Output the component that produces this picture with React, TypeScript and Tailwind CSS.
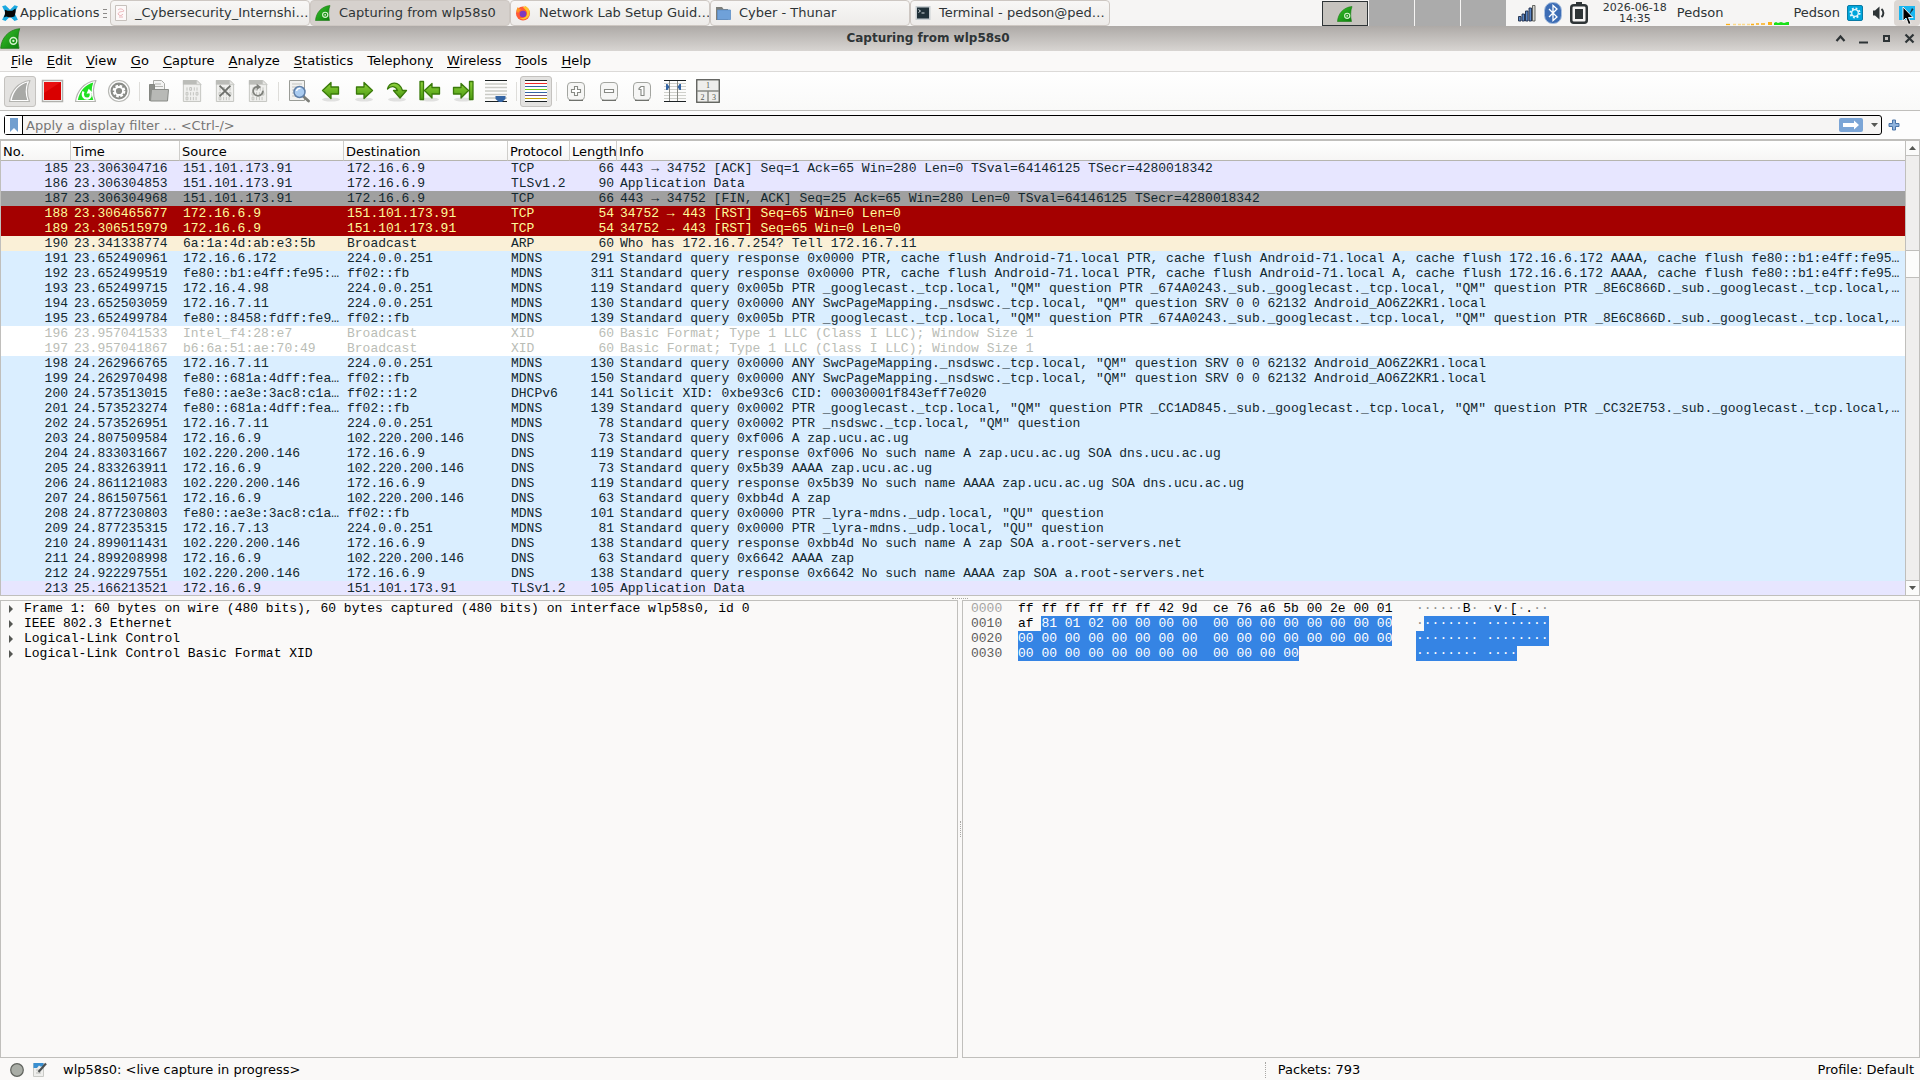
import { type ReactNode } from 'react';
import clsx from 'clsx';

type Packet = {
  no: number;
  time: string;
  source: string;
  destination: string;
  protocol: string;
  length: number;
  info: string;
  kind?: 'tcp' | 'fin' | 'rst' | 'arp' | 'xid';
};

const packets: Packet[] = [
  { no: 185, time: '23.306304716', source: '151.101.173.91', destination: '172.16.6.9', protocol: 'TCP', length: 66, info: '443 → 34752 [ACK] Seq=1 Ack=65 Win=280 Len=0 TSval=64146125 TSecr=4280018342', kind: 'tcp' },
  { no: 186, time: '23.306304853', source: '151.101.173.91', destination: '172.16.6.9', protocol: 'TLSv1.2', length: 90, info: 'Application Data', kind: 'tcp' },
  { no: 187, time: '23.306304968', source: '151.101.173.91', destination: '172.16.6.9', protocol: 'TCP', length: 66, info: '443 → 34752 [FIN, ACK] Seq=25 Ack=65 Win=280 Len=0 TSval=64146125 TSecr=4280018342', kind: 'fin' },
  { no: 188, time: '23.306465677', source: '172.16.6.9', destination: '151.101.173.91', protocol: 'TCP', length: 54, info: '34752 → 443 [RST] Seq=65 Win=0 Len=0', kind: 'rst' },
  { no: 189, time: '23.306515979', source: '172.16.6.9', destination: '151.101.173.91', protocol: 'TCP', length: 54, info: '34752 → 443 [RST] Seq=65 Win=0 Len=0', kind: 'rst' },
  { no: 190, time: '23.341338774', source: '6a:1a:4d:ab:e3:5b', destination: 'Broadcast', protocol: 'ARP', length: 60, info: 'Who has 172.16.7.254? Tell 172.16.7.11', kind: 'arp' },
  { no: 191, time: '23.652490961', source: '172.16.6.172', destination: '224.0.0.251', protocol: 'MDNS', length: 291, info: 'Standard query response 0x0000 PTR, cache flush Android-71.local PTR, cache flush Android-71.local A, cache flush 172.16.6.172 AAAA, cache flush fe80::b1:e4ff:fe95…' },
  { no: 192, time: '23.652499519', source: 'fe80::b1:e4ff:fe95:…', destination: 'ff02::fb', protocol: 'MDNS', length: 311, info: 'Standard query response 0x0000 PTR, cache flush Android-71.local PTR, cache flush Android-71.local A, cache flush 172.16.6.172 AAAA, cache flush fe80::b1:e4ff:fe95…' },
  { no: 193, time: '23.652499715', source: '172.16.4.98', destination: '224.0.0.251', protocol: 'MDNS', length: 119, info: 'Standard query 0x005b PTR _googlecast._tcp.local, "QM" question PTR _674A0243._sub._googlecast._tcp.local, "QM" question PTR _8E6C866D._sub._googlecast._tcp.local,…' },
  { no: 194, time: '23.652503059', source: '172.16.7.11', destination: '224.0.0.251', protocol: 'MDNS', length: 130, info: 'Standard query 0x0000 ANY SwcPageMapping._nsdswc._tcp.local, "QM" question SRV 0 0 62132 Android_AO6Z2KR1.local' },
  { no: 195, time: '23.652499784', source: 'fe80::8458:fdff:fe9…', destination: 'ff02::fb', protocol: 'MDNS', length: 139, info: 'Standard query 0x005b PTR _googlecast._tcp.local, "QM" question PTR _674A0243._sub._googlecast._tcp.local, "QM" question PTR _8E6C866D._sub._googlecast._tcp.local,…' },
  { no: 196, time: '23.957041533', source: 'Intel_f4:28:e7', destination: 'Broadcast', protocol: 'XID', length: 60, info: 'Basic Format; Type 1 LLC (Class I LLC); Window Size 1', kind: 'xid' },
  { no: 197, time: '23.957041867', source: 'b6:6a:51:ae:70:49', destination: 'Broadcast', protocol: 'XID', length: 60, info: 'Basic Format; Type 1 LLC (Class I LLC); Window Size 1', kind: 'xid' },
  { no: 198, time: '24.262966765', source: '172.16.7.11', destination: '224.0.0.251', protocol: 'MDNS', length: 130, info: 'Standard query 0x0000 ANY SwcPageMapping._nsdswc._tcp.local, "QM" question SRV 0 0 62132 Android_AO6Z2KR1.local' },
  { no: 199, time: '24.262970498', source: 'fe80::681a:4dff:fea…', destination: 'ff02::fb', protocol: 'MDNS', length: 150, info: 'Standard query 0x0000 ANY SwcPageMapping._nsdswc._tcp.local, "QM" question SRV 0 0 62132 Android_AO6Z2KR1.local' },
  { no: 200, time: '24.573513015', source: 'fe80::ae3e:3ac8:c1a…', destination: 'ff02::1:2', protocol: 'DHCPv6', length: 141, info: 'Solicit XID: 0xbe93c6 CID: 00030001f843eff7e020' },
  { no: 201, time: '24.573523274', source: 'fe80::681a:4dff:fea…', destination: 'ff02::fb', protocol: 'MDNS', length: 139, info: 'Standard query 0x0002 PTR _googlecast._tcp.local, "QM" question PTR _CC1AD845._sub._googlecast._tcp.local, "QM" question PTR _CC32E753._sub._googlecast._tcp.local,…' },
  { no: 202, time: '24.573526951', source: '172.16.7.11', destination: '224.0.0.251', protocol: 'MDNS', length: 78, info: 'Standard query 0x0002 PTR _nsdswc._tcp.local, "QM" question' },
  { no: 203, time: '24.807509584', source: '172.16.6.9', destination: '102.220.200.146', protocol: 'DNS', length: 73, info: 'Standard query 0xf006 A zap.ucu.ac.ug' },
  { no: 204, time: '24.833031667', source: '102.220.200.146', destination: '172.16.6.9', protocol: 'DNS', length: 119, info: 'Standard query response 0xf006 No such name A zap.ucu.ac.ug SOA dns.ucu.ac.ug' },
  { no: 205, time: '24.833263911', source: '172.16.6.9', destination: '102.220.200.146', protocol: 'DNS', length: 73, info: 'Standard query 0x5b39 AAAA zap.ucu.ac.ug' },
  { no: 206, time: '24.861121083', source: '102.220.200.146', destination: '172.16.6.9', protocol: 'DNS', length: 119, info: 'Standard query response 0x5b39 No such name AAAA zap.ucu.ac.ug SOA dns.ucu.ac.ug' },
  { no: 207, time: '24.861507561', source: '172.16.6.9', destination: '102.220.200.146', protocol: 'DNS', length: 63, info: 'Standard query 0xbb4d A zap' },
  { no: 208, time: '24.877230803', source: 'fe80::ae3e:3ac8:c1a…', destination: 'ff02::fb', protocol: 'MDNS', length: 101, info: 'Standard query 0x0000 PTR _lyra-mdns._udp.local, "QU" question' },
  { no: 209, time: '24.877235315', source: '172.16.7.13', destination: '224.0.0.251', protocol: 'MDNS', length: 81, info: 'Standard query 0x0000 PTR _lyra-mdns._udp.local, "QU" question' },
  { no: 210, time: '24.899011431', source: '102.220.200.146', destination: '172.16.6.9', protocol: 'DNS', length: 138, info: 'Standard query response 0xbb4d No such name A zap SOA a.root-servers.net' },
  { no: 211, time: '24.899208998', source: '172.16.6.9', destination: '102.220.200.146', protocol: 'DNS', length: 63, info: 'Standard query 0x6642 AAAA zap' },
  { no: 212, time: '24.922297551', source: '102.220.200.146', destination: '172.16.6.9', protocol: 'DNS', length: 138, info: 'Standard query response 0x6642 No such name AAAA zap SOA a.root-servers.net' },
  { no: 213, time: '25.166213521', source: '172.16.6.9', destination: '151.101.173.91', protocol: 'TLSv1.2', length: 105, info: 'Application Data', kind: 'tcp' },
];

const menus = [
  ['', 'F', 'ile'],
  ['', 'E', 'dit'],
  ['', 'V', 'iew'],
  ['', 'G', 'o'],
  ['', 'C', 'apture'],
  ['', 'A', 'nalyze'],
  ['', 'S', 'tatistics'],
  ['Telephon', 'y', ''],
  ['', 'W', 'ireless'],
  ['', 'T', 'ools'],
  ['', 'H', 'elp'],
];

const details = [
  'Frame 1: 60 bytes on wire (480 bits), 60 bytes captured (480 bits) on interface wlp58s0, id 0',
  'IEEE 802.3 Ethernet',
  'Logical-Link Control',
  'Logical-Link Control Basic Format XID',
];

// hex / ascii are split into [plain, selected]
const hexRows = [
  { offset: '0000', hex: ['ff ff ff ff ff ff 42 9d  ce 76 a6 5b 00 2e 00 01', ''], ascii: ['······B· ·v·[·.··', ''] },
  { offset: '0010', hex: ['af ', '81 01 02 00 00 00 00  00 00 00 00 00 00 00 00'], ascii: ['·', '······· ········'] },
  { offset: '0020', hex: ['', '00 00 00 00 00 00 00 00  00 00 00 00 00 00 00 00'], ascii: ['', '········ ········'] },
  { offset: '0030', hex: ['', '00 00 00 00 00 00 00 00  00 00 00 00'], ascii: ['', '········ ····'] },
];

const getRowStyle = (kind?: string) => {
  switch (kind) {
    case 'tcp': return 'bg-[#e7e6ff] text-[#12272e]';
    case 'fin': return 'bg-[#a0a0a0] text-[#12272e]';
    case 'rst': return 'bg-[#a40000] text-[#fffc9c]';
    case 'arp': return 'bg-[#faf0d7] text-[#12272e]';
    case 'xid': return 'bg-white text-[#babdb6]';
    default: return 'bg-[#daeeff] text-[#12272e]';
  }
};

/* ---------- icons ---------- */

function FinLogo({ size = 16 }: { size?: number }) {
  return (
    <svg width={size} height={size} viewBox="0 0 16 16" aria-hidden="true">
      <defs>
        <linearGradient id="fin-logo" x1="0" y1="0" x2="1" y2="1">
          <stop offset="0" stopColor="#3ac42c" />
          <stop offset="1" stopColor="#0a7d0c" />
        </linearGradient>
      </defs>
      <path d="M.5 15.500C1 8 6 1.500 15 .5c-1.600 4-1.700 10-.5 15z" fill="url(#fin-logo)" stroke="#1b7a14" strokeWidth=".6" />
      <circle cx="10.200" cy="9.800" r="2.600" fill="none" stroke="#d6f3cf" strokeWidth="1.100" />
      <circle cx="10.200" cy="9.800" r=".9" fill="#d6f3cf" />
    </svg>
  );
}

function Fin({ fill, children }: { fill: string; children?: ReactNode }) {
  return (
    <svg width="24" height="24" viewBox="0 0 24 24" aria-hidden="true">
      <path d="M1.500 22.500C3 12 10 3 22 1.500 18.500 8 19 16 21.500 22.500z" fill="#fff" stroke="#b4b4b0" strokeWidth="1.200" strokeLinejoin="round" />
      <path d="M3.800 21C5.500 12.500 11 5.500 19.300 3.500 17 9.500 17.300 15.500 19.300 21z" fill={fill} />
      {children}
    </svg>
  );
}

function BinaryDoc({ children }: { children?: ReactNode }) {
  return (
    <svg width="20" height="24" viewBox="0 0 22 26" aria-hidden="true">
      <path d="M1.500 1.500h15l4 4v19h-19z" fill="#f0f0ee" stroke="#c0c1bd" />
      <path d="M1 1h15v5H1z" fill="#bbbcb8" />
      <path d="M16 1l5 5h-5z" fill="#e6e6e4" stroke="#c0c1bd" strokeWidth=".8" />
      <g fill="none" stroke="#c3c4c0" strokeWidth="1.100">
        <path d="M5.500 9v3.600M8.500 9.200h2v3h-2zM13.500 9v3.600M16.500 9v3.600" />
        <path d="M4.500 14.500h2v3h-2zM9.500 14.300v3.600M12.500 14.300v3.600M15.500 14.500h2v3h-2z" />
        <path d="M4.500 19.700h2v3h-2zM9.500 19.500v3.600M12.500 19.500v3.600M15.500 19.500v3.600" />
      </g>
      {children}
    </svg>
  );
}

function GreenArrow({ d, flip }: { d: string; flip?: boolean }) {
  return (
    <svg width="24" height="24" viewBox="0 0 24 24" aria-hidden="true" className={clsx(flip && '-scale-x-100')}>
      <defs>
        <linearGradient id="green-arrow" x1="0" y1="0" x2="0" y2="1">
          <stop offset="0" stopColor="#8fd23c" />
          <stop offset="1" stopColor="#4a9a10" />
        </linearGradient>
      </defs>
      <ellipse cx="12" cy="20.500" rx="9" ry="2" fill="#000" opacity=".1" />
      <path d={d} fill="url(#green-arrow)" stroke="#3a7a0a" strokeWidth="1.300" strokeLinejoin="round" />
    </svg>
  );
}

const arrowLeft = 'M3.500 11.500L12 3.500v4.500h7.500v7H12v4.500z';
const arrowFirst = 'M2 2.500h3.500v18H2zM6.500 11.500L14 4.500v4h7.500v6.500H14v4z';
const arrowGoto = 'M2.500 10C4 3.500 13.500 .5 17.500 11.500h4L15 19 8.500 11.500h4C10.500 6.500 6 6.500 2.500 10z';

function ZoomBox({ d }: { d: string }) {
  return (
    <svg width="22" height="22" viewBox="0 0 22 22" aria-hidden="true">
      <rect x="2.500" y="2.500" width="17" height="17.500" rx="3.500" fill="#f6f6f5" stroke="#a3a5a0" />
      <path d="M4 20.500h14" stroke="#6f716c" />
      <path d={d} fill="#fff" stroke="#888a85" strokeWidth="1.100" />
    </svg>
  );
}

const Stop = () => (
  <svg width="24" height="24" viewBox="0 0 24 24" aria-hidden="true">
    <rect x="1.500" y="1.500" width="20" height="21" fill="#fff" stroke="#b0b0ac" strokeWidth="1.500" />
    <rect x="3" y="3" width="17" height="18" fill="#d90000" />
    <path d="M3 3h17L3 14z" fill="#e81010" />
  </svg>
);

const Restart = () => (
  <Fin fill="#1fe01f">
    <path d="M9.500 12.500c-2 4 .5 7.500 4 7.200 3-.3 4.200-3.700 2.800-6.200" fill="none" stroke="#fff" strokeWidth="2.200" />
    <path d="M12.500 14.800l2.200-5 4 4z" fill="#fff" />
  </Fin>
);

const Options = () => (
  <svg width="24" height="24" viewBox="0 0 24 24" aria-hidden="true">
    <circle cx="12" cy="12" r="10.500" fill="#fff" stroke="#b8b9b5" strokeWidth="1.200" />
    <circle cx="12" cy="12" r="8.500" fill="#8a8c88" />
    <circle cx="12" cy="12" r="5.300" fill="none" stroke="#fff" strokeWidth="2.200" strokeDasharray="2.600 1.560" />
    <circle cx="12" cy="12" r="4" fill="none" stroke="#fff" strokeWidth="1.800" />
  </svg>
);

const OpenFile = () => (
  <svg width="24" height="24" viewBox="0 0 24 24" aria-hidden="true">
    <path d="M6.500 1.500h8l3 3v8h-11z" fill="#f4f4f3" stroke="#a9aaa6" />
    <path d="M8 5h6M8 7.500h8" stroke="#b5b6b2" />
    <path d="M2.500 5.500h5v5h13v11h-18z" fill="#8d8f8a" stroke="#848681" />
    <path d="M4.500 10.500h17l-1 11.500h-17z" fill="#b8b9b6" stroke="#8a8c88" />
  </svg>
);

const Find = () => (
  <svg width="24" height="24" viewBox="0 0 24 24" aria-hidden="true">
    <path d="M3.500 1.500h15v20h-15z" fill="#f2f2f0" stroke="#9a9c97" />
    <path d="M6 5h10M6 8h10M6 11h4M6 14h3M6 17h4" stroke="#c4c5c1" />
    <path d="M17.500 17.500l5 4.500" stroke="#7c7e79" strokeWidth="2.800" strokeLinecap="round" />
    <circle cx="13.500" cy="13" r="5.500" fill="#a9cbf0" stroke="#5f7fa8" strokeWidth="1.500" />
    <path d="M10.500 12c.5-2 2-3 4-2.600" fill="none" stroke="#fff" strokeWidth="1.300" />
  </svg>
);

const AutoScroll = () => (
  <svg width="22" height="24" viewBox="0 0 22 24" aria-hidden="true">
    <path d="M0 1.500h22M0 22.500h22" stroke="#1c2224" strokeWidth="1.200" />
    <path d="M0 5h22M0 8.500h22M0 12h22M0 15.500h22M0 19h22" stroke="#c9cac5" strokeWidth="1.500" />
    <path d="M10.500 17h10v3l-3.500 3h-3l-3.500-3z" fill="#3465a4" />
  </svg>
);

const Colorize = () => (
  <svg width="22" height="24" viewBox="0 0 22 24" aria-hidden="true">
    <rect y="1" width="22" height="22" fill="#fff" />
    <path d="M0 1.500h22M0 22.500h22" stroke="#1c2224" />
    <path d="M0 4.500h22" stroke="#ef2929" />
    <path d="M0 7.500h22" stroke="#3465a4" />
    <path d="M0 10.500h22" stroke="#73d216" />
    <path d="M0 13.500h22" stroke="#3465a4" />
    <path d="M0 16.500h22" stroke="#75507b" />
    <path d="M0 19.500h22" stroke="#c4a000" />
  </svg>
);

const ResizeColumns = () => (
  <svg width="22" height="24" viewBox="0 0 22 24" aria-hidden="true">
    <path d="M0 1.500h22M0 22.500h22" stroke="#1c2224" />
    <path d="M0 4.500h22M0 7.500h22M0 10.500h22M0 13.500h22M0 16.500h22M0 19.500h22" stroke="#cfd0cb" />
    <path d="M5.500 2v20M13.500 2v20" stroke="#888a85" />
    <path d="M2 5h1.500L5.500 8l-2 3H2zM17 5h-1.500l-2 3 2 3H17z" fill="#3465a4" />
  </svg>
);

const Layout = () => (
  <svg width="24" height="24" viewBox="0 0 24 24" aria-hidden="true" className="font-['Liberation_Serif',serif]">
    <rect x=".75" y=".75" width="22.500" height="22.500" fill="#eeeeec" stroke="#555753" strokeWidth="1.300" />
    <path d="M1 12h22M12 12v11" stroke="#888a85" strokeWidth="1.500" />
    <g fill="#555753" fontSize="8" textAnchor="middle">
      <text x="12" y="9">1</text>
      <text x="6.500" y="20.500">2</text>
      <text x="18" y="20.500">3</text>
    </g>
  </svg>
);

const toolGroups: { label: string; icon: ReactNode; pressed?: boolean }[][] = [
  [
    { label: 'Start capture', icon: <Fin fill="#a8a9a6" />, pressed: true },
    { label: 'Stop capture', icon: <Stop /> },
    { label: 'Restart capture', icon: <Restart /> },
    { label: 'Capture options', icon: <Options /> },
  ],
  [
    { label: 'Open', icon: <OpenFile /> },
    { label: 'Save', icon: <BinaryDoc /> },
    { label: 'Close', icon: <BinaryDoc><path d="M5 7l12 12M17 7L5 19" stroke="#6c6e6a" strokeWidth="2" /></BinaryDoc> },
    { label: 'Reload', icon: <BinaryDoc><path d="M10 8.500c-4 0-6 5.500-2.500 8.500 4 3 9.500 0 8.800-4.500" fill="none" stroke="#7f817c" strokeWidth="2" /><path d="M9.500 5l5 3.500-5 3.500z" fill="#7f817c" /></BinaryDoc> },
  ],
  [
    { label: 'Find packet', icon: <Find /> },
    { label: 'Previous packet', icon: <GreenArrow d={arrowLeft} /> },
    { label: 'Next packet', icon: <GreenArrow d={arrowLeft} flip /> },
    { label: 'Go to packet', icon: <GreenArrow d={arrowGoto} /> },
    { label: 'First packet', icon: <GreenArrow d={arrowFirst} /> },
    { label: 'Last packet', icon: <GreenArrow d={arrowFirst} flip /> },
    { label: 'Auto scroll', icon: <AutoScroll /> },
  ],
  [{ label: 'Colorize', icon: <Colorize />, pressed: true }],
  [
    { label: 'Zoom in', icon: <ZoomBox d="M9.500 6.500h3v3h3v3h-3v3h-3v-3h-3v-3h3z" /> },
    { label: 'Zoom out', icon: <ZoomBox d="M6.500 9.500h9v3h-9z" /> },
    { label: 'Normal size', icon: <ZoomBox d="M8 8.500l2-2h3v9h-3v-6H8z" /> },
    { label: 'Resize columns', icon: <ResizeColumns /> },
    { label: 'Reset layout', icon: <Layout /> },
  ],
];

const DocIcon = () => (
  <svg width="12" height="16" viewBox="0 0 12 16" aria-hidden="true">
    <path d="M.5.5h11v15H.5z" fill="#fdf9f9" stroke="#c6c1bc" />
    <path d="M3 5c2-2 5-1 6 1-2 1-5 0-6 3 1 2 4 2 5 0M4 12h4" fill="none" stroke="#e9aeb2" strokeWidth=".9" />
  </svg>
);

const Firefox = () => (
  <svg width="16" height="16" viewBox="0 0 16 16" aria-hidden="true">
    <circle cx="8" cy="8.500" r="7" fill="#ff5a36" />
    <path d="M9.500.5C13 2 15.500 6 14.800 10c1-5-1.300-6-3-6.500C10.500 3 10 2 9.500.5z" fill="#ffbd2e" />
    <path d="M8 2c4-1 7.500 3 6.500 7.500C13.500 14 8 16 4.500 13 9 14 12.500 11 12 7.500 11.500 4.500 9 4 8 2z" fill="#ffc52c" />
    <path d="M1.500 6c0-2 1-3.500 1.500-4 .5 1.500 1.500 2 3 2.500L3 8z" fill="#ff9522" />
    <circle cx="8" cy="9" r="3.300" fill="#7d3ac1" />
  </svg>
);

const Folder = () => (
  <svg width="16" height="16" viewBox="0 0 16 16" aria-hidden="true">
    <path d="M1 2h6l1.500 2H13v11H1z" fill="#7d7f7a" />
    <path d="M2.500 5h13v9.500h-13z" fill="#6fa1d9" stroke="#5e8fc7" strokeWidth=".8" />
  </svg>
);

const TerminalIcon = () => (
  <svg width="16" height="16" viewBox="0 0 16 16" aria-hidden="true">
    <rect x=".5" y="1" width="15" height="14" fill="#c9cfd2" />
    <rect x="2" y="2.500" width="12" height="11" fill="#1f3038" />
    <path d="M3.500 4.500l2 1.500-2 1.500M6.500 8h3" fill="none" stroke="#e8eef0" strokeWidth=".9" />
  </svg>
);

const tasks = [
  { title: '_Cybersecurity_Internshi…', icon: <DocIcon /> },
  { title: 'Capturing from wlp58s0', icon: <FinLogo />, active: true },
  { title: 'Network Lab Setup Guid…', icon: <Firefox /> },
  { title: 'Cyber - Thunar', icon: <Folder /> },
  { title: 'Terminal - pedson@ped…', icon: <TerminalIcon /> },
];

/* ---------- desktop panel ---------- */

function Panel() {
  return (
    <header className="flex h-[26px] shrink-0 items-center bg-[#f6f5f4] text-[#2e3436]">
      <button className="flex h-full w-[110px] items-center gap-0.5 pl-0.5">
        <svg width="16" height="18" viewBox="0 0 14 16" className="shrink-0" aria-hidden="true">
          <path d="M0 2l3-1 4 4 4-4 3 1-3 6 3 6-3 1-4-4-4 4-3-1 3-6z" fill="#1ba9e1" />
          <path d="M2.500 5l2.500 1h4l3-2v3l-1 4-4 1-3.500-1-2 1 1-3z" fill="#050505" />
        </svg>
        Applications
        <svg width="4" height="9" viewBox="0 0 4 9" className="ml-0.5 shrink-0" aria-hidden="true">
          <path d="M0 .5h4M0 4.500h4M0 8.500h4" stroke="#8c8a88" />
        </svg>
      </button>

      <nav className="flex h-full">
        {tasks.map((task) => (
          <button
            key={task.title}
            className={clsx(
              'flex h-full w-[200px] items-center gap-2 overflow-hidden whitespace-nowrap rounded-[4px] border border-[#cdc7c2] pl-1',
              task.active ? 'bg-[#d6d1cd]' : 'bg-gradient-to-b from-[#f8f7f6] to-[#edebe9]',
            )}
          >
            <span className="shrink-0">{task.icon}</span>
            {task.title}
          </button>
        ))}
      </nav>

      <div className="ml-auto flex h-full items-center">
        {/* Workspaces */}
        <div className="flex h-full gap-px">
          <button aria-label="Workspace 1" className="mt-px flex w-[46px] items-center justify-center border border-[#2e3436] bg-[#c6c3be]">
            <FinLogo />
          </button>
          <button aria-label="Workspace 2" className="w-[45px] bg-[#ababab]" />
          <button aria-label="Workspace 3" className="w-[45px] bg-[#ababab]" />
          <button aria-label="Workspace 4" className="w-[45px] bg-[#ababab]" />
        </div>

        <svg width="18" height="18" viewBox="0 0 18 18" className="ml-3" aria-hidden="true">
          <g fill="#5b86c4" stroke="#1d2b45" strokeWidth=".9">
            <path d="M.5 12.500h2.500v4.500H.5zM4 10h2.500v7H4zM7.500 7h2.500v10H7.500zM11 4h2.500v13H11z" />
            <path d="M14.500 1.500H17V17h-2.500z" fill="#d5d5d2" stroke="#555753" />
          </g>
        </svg>
        <svg width="18" height="22" viewBox="0 0 18 22" className="ml-2" aria-hidden="true">
          <rect x=".5" y=".5" width="17" height="21" rx="8" fill="#3d6db5" stroke="#a8bfdf" />
          <path d="M5 7l8 8-4 3.500v-15L13 7l-8 8" fill="none" stroke="#fff" strokeWidth="1.300" />
        </svg>
        <svg width="18" height="22" viewBox="0 0 18 22" className="ml-2" aria-hidden="true">
          <path d="M6 0h6v3H6z" fill="#2e3436" />
          <rect x="1.250" y="3.250" width="15.500" height="17.500" rx="2.500" fill="none" stroke="#2e3436" strokeWidth="2.500" />
          <path d="M5 7h8v10H5z" fill="#2e3436" />
        </svg>
        <button className="ml-[14px] w-[66px] text-center text-[11px] leading-[11px]">
          2026-06-18
          <br />
          14:35
        </button>
        <span className="ml-[9px]">Pedson</span>
        <svg width="66" height="26" viewBox="0 0 66 26" aria-hidden="true">
          <path d="M3 24.500h4" stroke="#fcaf17" strokeWidth="1.300" />
          <path d="M10 24.500h3M15 24.500h3M19 24.500h3M24 24.500h3" stroke="#fcd98a" strokeWidth="1.300" />
          <path d="M28 24.500h3M33 24h3M38 24h4" stroke="#fcaf17" strokeWidth="1.500" />
          <path d="M45 22h4v3h-4z" fill="#fcaf17" />
          <path d="M51 25v-2l2-1 2 1 3-1 3 1 3-1 3 0v3z" fill="#18e018" />
        </svg>
        <span className="ml-1">Pedson</span>
        <svg width="16" height="16" viewBox="0 0 16 16" className="ml-[7px]" aria-hidden="true">
          <rect x=".5" y=".5" width="15" height="15" rx="1.500" fill="#00a6dc" stroke="#0a7ba5" />
          <circle cx="8" cy="8" r="4.600" fill="none" stroke="#e6f7fd" strokeWidth="2" strokeDasharray="1.800 1.810" />
          <circle cx="8" cy="8" r="3.300" fill="none" stroke="#e6f7fd" strokeWidth="1.300" />
        </svg>
        <svg width="14" height="14" viewBox="0 0 14 14" className="ml-[9px]" aria-hidden="true">
          <path d="M1 4.500h2L7.500.5v13L3 9.500H1z" fill="#2e3436" />
          <path d="M9.500 3c2.500 2 2.500 6 0 8" fill="none" stroke="#2e3436" strokeWidth="2" />
        </svg>
        <button aria-label="Notifications" className="relative ml-2 flex h-full w-[26px] items-center justify-center rounded-[4px] bg-[#dcd7d3]">
          <svg width="16" height="14" viewBox="0 0 16 14" aria-hidden="true">
            <path d="M0 0h16v14H0z" fill="#19b6f0" />
            <path d="M13 2l1.500 1.500L10 9z" fill="#16323e" />
          </svg>
          <svg width="12" height="20" viewBox="0 0 12 20" className="absolute left-2 top-[6px]" aria-hidden="true">
            <path d="M1 1v14l3-3 2.500 6.500 2.500-1L6.500 11.500H11z" fill="#000" stroke="#fff" strokeWidth=".9" />
          </svg>
        </button>
      </div>
    </header>
  );
}

/* ---------- window ---------- */

function TitleBar() {
  return (
    <div className="flex h-[25px] shrink-0 items-center bg-gradient-to-b from-[#aeaaa7] to-[#d8d5d2] text-[#2e3436]">
      <FinLogo size={21} />
      <h1 className="flex-1 pb-px text-center text-[12px] font-bold">Capturing from wlp58s0</h1>
      <div className="flex items-center gap-3 pr-[5px]">
        <button aria-label="Roll up">
          <svg width="11" height="11" viewBox="0 0 11 11"><path d="M1.500 8L5.500 3.500 9.500 8" fill="none" stroke="#2e3436" strokeWidth="2.200" /></svg>
        </button>
        <button aria-label="Minimize">
          <svg width="11" height="11" viewBox="0 0 11 11"><path d="M1 9.500h9" stroke="#2e3436" strokeWidth="2" /></svg>
        </button>
        <button aria-label="Maximize">
          <svg width="11" height="11" viewBox="0 0 11 11"><path d="M3 3h5v5H3z" fill="none" stroke="#2e3436" strokeWidth="2" /></svg>
        </button>
        <button aria-label="Close">
          <svg width="11" height="11" viewBox="0 0 11 11"><path d="M1.500 1.500l8 8M9.500 1.500l-8 8" stroke="#2e3436" strokeWidth="2.200" /></svg>
        </button>
      </div>
    </div>
  );
}

function Toolbar() {
  return (
    <div className="flex h-[39px] shrink-0 items-center border-b border-[#c0bfbc] bg-gradient-to-b from-white to-[#f9f9f8] pl-1">
      {toolGroups.map((group, i) => (
        <div key={i} className="flex items-center">
          {i > 0 && <span className="mx-[3px] h-[19px] w-px bg-[#deddda]" />}
          {group.map((tool) => (
            <button
              key={tool.label}
              aria-label={tool.label}
              className={clsx(
                'mr-px flex h-[31px] w-8 items-center justify-center rounded-[3px] border',
                tool.pressed ? 'border-[#c4c2bf] bg-[#e3e2e0]' : 'border-transparent',
              )}
            >
              {tool.icon}
            </button>
          ))}
        </div>
      ))}
    </div>
  );
}

function FilterBar() {
  return (
    <div className="flex h-7 shrink-0 items-center bg-[#fdfdfd] pl-1">
      <div className="flex h-5 flex-1 items-center rounded-[3px] border border-black bg-[#f6f5f4]">
        <button aria-label="Filter bookmarks" className="flex h-full w-[18px] items-center justify-center border-r border-black bg-white">
          <svg width="8" height="14" viewBox="0 0 8 14" aria-hidden="true">
            <path d="M0 0h8v14l-4-4-4 4z" fill="#729fcf" />
          </svg>
        </button>
        <input
          type="text"
          aria-label="Display filter"
          placeholder="Apply a display filter … <Ctrl-/>"
          className="h-full min-w-0 flex-1 bg-transparent pl-[3px] outline-none placeholder:text-[#777674]"
        />
        <button aria-label="Apply filter" className="flex h-[14px] w-6 items-center justify-center rounded-[2px] bg-[#7ba5d6]">
          <svg width="18" height="10" viewBox="0 0 18 10" aria-hidden="true">
            <path d="M1 3h11V.5L17 5l-5 4.500V7H1z" fill="#fff" />
          </svg>
        </button>
        <button aria-label="Filter history" className="flex h-full w-[18px] items-center justify-center pl-1">
          <svg width="7" height="4" viewBox="0 0 7 4" aria-hidden="true"><path d="M0 0h7L3.500 4z" fill="#555753" /></svg>
        </button>
      </div>
      <button aria-label="Add filter button" className="flex w-[38px] pl-[6px]">
        <svg width="12" height="12" viewBox="0 0 12 12" aria-hidden="true">
          <path d="M4.500 1h3v3.500H11v3H7.500V11h-3V7.500H1v-3h3.500z" fill="#8fb3dd" stroke="#4a74a8" />
        </svg>
      </button>
    </div>
  );
}

function ScrollBar() {
  return (
    <div className="flex w-[14px] shrink-0 flex-col border-l border-[#c0bfbc] bg-[#efeeed]">
      <button aria-label="Scroll up" className="flex h-[15px] items-center justify-center border-b border-[#c0bfbc] bg-[#fbfbfa]">
        <svg width="7" height="4" viewBox="0 0 7 4"><path d="M0 4h7L3.500 0z" fill="#555753" /></svg>
      </button>
      <div className="flex flex-1 flex-col">
        <div className="flex-[94]" />
        <div className="h-7 border-y border-[#c0bfbc] bg-[#fcfcfb]" />
        <div className="flex-[303]" />
      </div>
      <button aria-label="Scroll down" className="flex h-[15px] items-center justify-center border-t border-[#c0bfbc] bg-[#fbfbfa]">
        <svg width="7" height="4" viewBox="0 0 7 4"><path d="M0 0h7L3.500 4z" fill="#555753" /></svg>
      </button>
    </div>
  );
}

function PacketList() {
  const th = 'h-5 overflow-hidden whitespace-nowrap border-b border-r border-b-[#b6b5af] border-r-[#cfcecb] p-0 pl-[2px] pt-[2px] text-left font-normal leading-[17px]';
  const td = 'overflow-hidden whitespace-nowrap p-0 px-[3px]';
  return (
    <section className="flex min-h-0 flex-[454] border border-t-2 border-[#c0bfbc] bg-white">
      <div className="min-w-0 flex-1 overflow-hidden">
        <table className="w-full table-fixed border-separate border-spacing-0">
          <colgroup>
            <col className="w-[70px]" />
            <col className="w-[109px]" />
            <col className="w-[164px]" />
            <col className="w-[164px]" />
            <col className="w-[62px]" />
            <col className="w-[47px]" />
            <col />
          </colgroup>
          <thead className="bg-gradient-to-b from-white to-[#f6f5f4] text-black">
            <tr>
              <th className={th}>No.</th>
              <th className={th}>Time</th>
              <th className={th}>Source</th>
              <th className={th}>Destination</th>
              <th className={th}>Protocol</th>
              <th className={th}>Length</th>
              <th className={clsx(th, 'border-r-0')}>Info</th>
            </tr>
          </thead>
          <tbody className="font-['Liberation_Mono',monospace] text-[13px] leading-[15px]">
            {packets.map((p) => (
              <tr key={p.no} className={getRowStyle(p.kind)}>
                <td className={clsx(td, 'text-right')}>{p.no}</td>
                <td className={td}>{p.time}</td>
                <td className={td}>{p.source}</td>
                <td className={td}>{p.destination}</td>
                <td className={td}>{p.protocol}</td>
                <td className={clsx(td, 'text-right')}>{p.length}</td>
                <td className={td}>{p.info}</td>
              </tr>
            ))}
          </tbody>
        </table>
      </div>
      <ScrollBar />
    </section>
  );
}

function Selectable({ parts }: { parts: string[] }) {
  return (
    <span className="flex whitespace-pre">
      {/* non-printable bytes are dimmed */}
      <span>
        {parts[0].split(/(·+)/).map((run, i) => (
          <span key={i} className={clsx(run.startsWith('·') && 'text-[#8f8e8c]')}>{run}</span>
        ))}
      </span>
      <span className="bg-[#3584e4] text-white">{parts[1]}</span>
    </span>
  );
}

function StatusBar() {
  return (
    <footer className="flex h-[22px] shrink-0 items-center bg-[#faf9f8] pt-px text-black">
      <div className="flex flex-[1254] items-center pl-[10px]">
        <button aria-label="Expert information">
          <svg width="14" height="14" viewBox="0 0 14 14"><circle cx="7" cy="7" r="6.300" fill="#a9ada6" stroke="#5f625d" strokeWidth="1.200" /></svg>
        </button>
        <button aria-label="Capture file comment" className="ml-2">
          <svg width="16" height="16" viewBox="0 0 16 16">
            <path d="M1.500 1.500h10v13h-10z" fill="#eeeeec" stroke="#c9cac6" />
            <path d="M1.500 1h10v3.500h-3L7 3.500 5 6H1.500z" fill="#3a8fd0" />
            <path d="M4 8h4M4 11h5" stroke="#bcbdb9" />
            <path d="M14 1.500L6.500 10" stroke="#4b4f50" strokeWidth="2.200" />
          </svg>
        </button>
        <span className="ml-[15px]">wlp58s0: &lt;live capture in progress&gt;</span>
      </div>
      <span className="h-4 border-l border-dotted border-[#a9a8a5]" />
      <div className="flex flex-[636] justify-between pl-3 pr-[6px]">
        <span>Packets: 793</span>
        <button>Profile: Default</button>
      </div>
    </footer>
  );
}

export default function App() {
  return (
    <div className="flex h-screen flex-col overflow-hidden bg-[#faf9f8] font-['DejaVu_Sans',sans-serif] text-[13px] leading-[16px]">
      <Panel />
      <TitleBar />

      <nav className="flex h-[21px] shrink-0 items-center border-b border-[#dcdad8] pl-1 text-black">
        {menus.map(([before, key, after]) => (
          <button key={before + key + after} className="px-[7px]">
            {before}
            <span className="underline underline-offset-2">{key}</span>
            {after}
          </button>
        ))}
      </nav>

      <Toolbar />
      <FilterBar />

      <main className="flex min-h-0 flex-1 flex-col">
        <PacketList />

        {/* Splitter handle */}
        <div className="flex h-1 shrink-0 items-center justify-center">
          <span className="w-4 border-t border-dotted border-[#a9a8a5]" />
        </div>

        <div className="flex min-h-0 flex-[458] font-['Liberation_Mono',monospace] leading-[15px] text-black">
          {/* Packet details */}
          <section className="min-w-0 flex-1 overflow-hidden border border-[#c0bfbc]">
            <ul>
              {details.map((line) => (
                <li key={line} className="flex items-center gap-[11px] whitespace-nowrap pl-2">
                  <svg width="4" height="8" viewBox="0 0 4 8" aria-hidden="true"><path d="M0 0l4 4-4 4z" fill="#555753" /></svg>
                  {line}
                </li>
              ))}
            </ul>
          </section>

          <div className="flex w-1 shrink-0 items-center justify-center">
            <span className="h-4 border-l border-dotted border-[#a9a8a5]" />
          </div>

          {/* Packet bytes */}
          <section className="min-w-0 flex-1 overflow-hidden border border-[#c0bfbc]">
            {hexRows.map((row, i) => (
              <div key={row.offset} className="flex pl-2">
                <span className={clsx('w-[47px]', i === 0 ? 'text-[#a5a4a2]' : 'text-[#5e5d5b]')}>{row.offset}</span>
                <span className="w-[398px]">
                  <Selectable parts={row.hex} />
                </span>
                <Selectable parts={row.ascii} />
              </div>
            ))}
          </section>
        </div>
      </main>

      <StatusBar />
    </div>
  );
}
